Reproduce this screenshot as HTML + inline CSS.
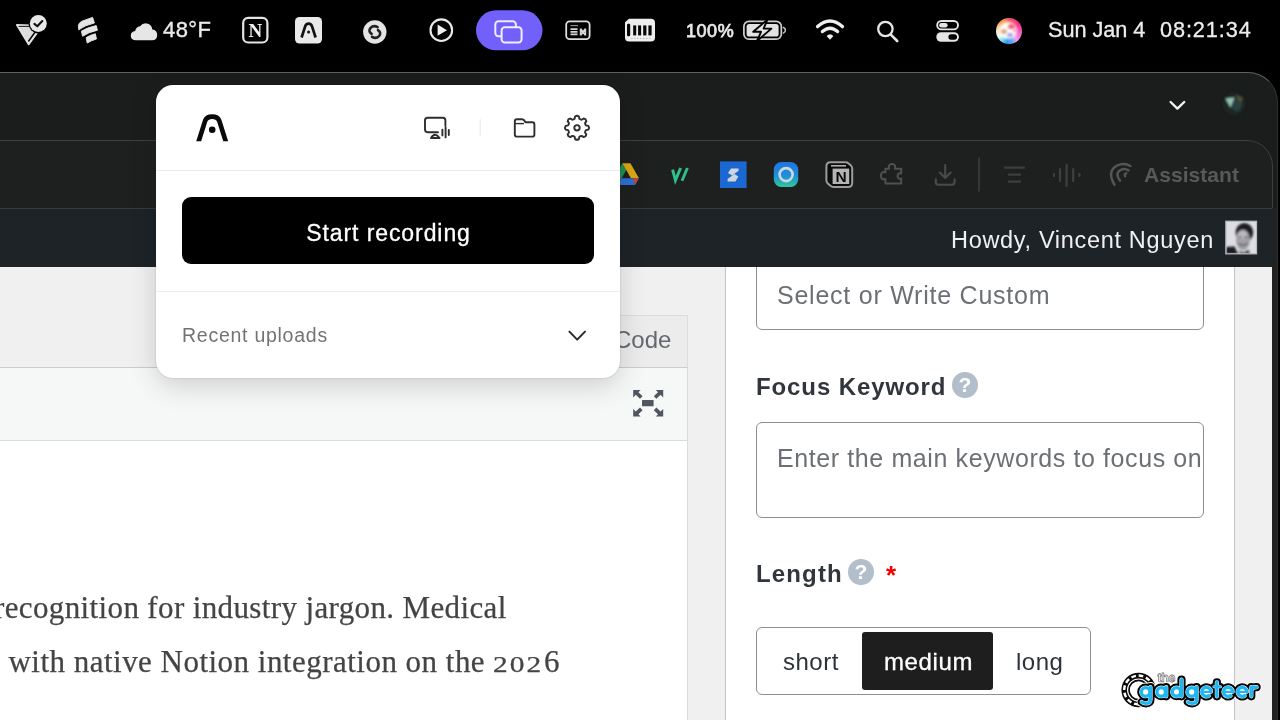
<!DOCTYPE html>
<html><head><meta charset="utf-8">
<style>
*{box-sizing:border-box;margin:0;padding:0}
html,body{width:1280px;height:720px;overflow:hidden;background:#000;font-family:"Liberation Sans",sans-serif;}
body{position:relative}
.a{position:absolute}
.a,.t,.ph,.lbl,.q{will-change:transform}
.t{position:absolute;white-space:nowrap}
/* browser window chrome */
#win{left:-40px;top:72px;width:1318px;height:700px;background:#1b1d1d;border:1px solid #5e6060;border-right-color:#2e3030;border-radius:0 30px 0 0}
#tool{left:-40px;top:140px;width:1313px;height:80px;border:1px solid #3d3f3f;border-radius:0 26px 0 0;background:#1e2020}
#wpbar{z-index:5;left:0;top:208px;width:1272px;height:59px;background:#1d2327;border-top:1px solid #383b3d}
#page{left:0;top:267px;width:1272px;height:453px;background:#f0f0f1}
#rstrip{left:1272px;top:208px;width:5px;height:512px;background:#202222}
#howdy{z-index:6;top:226.3px;left:951px;color:#f0f0f1;font-size:23.5px;letter-spacing:.68px;line-height:28px}
/* editor */
#codetab{left:600px;top:315px;width:88px;height:53px;background:#ececec;border:1px solid #dcdcde}
#edbar{left:0;top:367px;width:688px;height:74px;background:#f6f7f7;border:1px solid #dcdcde;border-top-color:#cbcccd;border-left:0}
#edbody{left:0;top:441px;width:688px;height:290px;background:#fff;border-right:1px solid #dcdcde}
.serif{font-family:"Liberation Serif",serif;color:#444;font-size:31px;line-height:36px;-webkit-text-stroke:.25px #444}
.os{display:inline-block;font-size:23.5px;letter-spacing:1.7px;width:50.6px;transform:scaleX(1.25);transform-origin:0 50%}
/* sidebar */
#side{left:725px;top:267px;width:510px;height:460px;background:#fff;border-left:1px solid #c3c4c7;border-right:1px solid #c3c4c7}
.inp{position:absolute;border:1.5px solid #8c8f94;border-radius:6px;background:#fff}
.ph{position:absolute;color:#6c7075;font-size:25px;letter-spacing:.76px;line-height:28px;white-space:nowrap}
.lbl{position:absolute;font-weight:bold;font-size:24px;color:#30363b;white-space:nowrap;line-height:28px}
.q{position:absolute;width:25.8px;height:25.8px;border-radius:50%;background:#b3becb;color:#fff;font-weight:bold;font-size:21px;text-align:center;line-height:26.6px}
/* popup */
#popup{z-index:10;left:156px;top:85px;width:464px;height:293px;background:#fff;border-radius:17px;box-shadow:0 8px 28px rgba(0,0,0,.16),0 0 2px rgba(0,0,0,.22)}
.sep{z-index:11;position:absolute;left:156px;width:464px;height:1px;background:#ebebeb}
#rec{z-index:11;left:182px;top:197px;width:412px;height:67px;background:#000;border-radius:9px;color:#fff;font-size:23px;letter-spacing:.92px;text-align:center;line-height:72.2px;padding-left:1px;-webkit-text-stroke:.3px #fff}
#recent{z-index:11;left:182px;top:321px;color:#737373;font-size:19.5px;letter-spacing:.74px;line-height:28px}
</style></head><body>
<!-- MENUBAR -->
<div id="menubar">
<svg class="a" style="left:0;top:0" width="1280" height="72" viewBox="0 0 1280 72">
<defs>
<radialGradient id="siri" cx="0.5" cy="0.5" r="0.5"><stop offset="0" stop-color="#fff"/><stop offset="0.55" stop-color="#ffd0dc"/><stop offset="1" stop-color="#ff5a7a"/></radialGradient>
<linearGradient id="siri2" x1="0" y1="0" x2="1" y2="1"><stop offset="0" stop-color="#ff9a3c"/><stop offset="0.45" stop-color="#ff4f8b"/><stop offset="0.75" stop-color="#b46bff"/><stop offset="1" stop-color="#2fb6ff"/></linearGradient>
</defs>
<!-- icon1: triangle + check circle -->
<path d="M16.8 24.9 L31 25.3 L36.8 33.2 L28.6 44.4 Z" fill="#dcdcdc" stroke="#e4e4e4" stroke-width="1.8" stroke-linejoin="round"/>
<path d="M18.6 26.4 L29.5 26.4" stroke="#222" stroke-width="1.1"/>
<path d="M28.7 41 L34.6 32.8" stroke="#0a0a0a" stroke-width="1.5" stroke-linecap="round"/>
<circle cx="38.3" cy="23.6" r="9.8" fill="#000"/>
<circle cx="38.3" cy="23.6" r="8.5" fill="#e8e8e8"/>
<path d="M34.4 23.9 L37.3 26.3 L42.3 21" fill="none" stroke="#111" stroke-width="2.1" stroke-linecap="round" stroke-linejoin="round"/>
<!-- icon2: stacked bands -->
<g fill="#e4e4e4" stroke="#e4e4e4" stroke-width="1" stroke-linejoin="round">
<path d="M78.4 25.4 Q79 22.6 82 21.2 L92.6 17.4 L94.4 23 Q85 25 78.8 29.8 Z"/>
<path d="M81.4 31.2 Q88 27.2 96.2 25.6 L97.4 30.2 Q89 32 82.6 36.2 Z"/>
<path d="M86.2 37.6 Q90.4 35 95.4 33.8 L96.4 39 Q91 40.6 87.2 43 Z"/>
</g>
<!-- cloud -->
<path d="M136 40.3 Q130.8 40.3 130.8 35.6 Q130.8 31.5 135.2 31 Q136 26.6 140 26.2 Q142.6 23 146.6 23.4 Q151.4 24 152.4 29.4 Q157.2 30 157.2 35 Q157.2 40.3 152 40.3 Z" fill="#e6e6e6"/>
<!-- notion -->
<rect x="243.2" y="17.9" width="24.2" height="24.6" rx="5" fill="none" stroke="#e4e4e4" stroke-width="2.2"/>
<text x="255.3" y="36.8" font-family="Liberation Serif" font-weight="bold" font-size="19" fill="#f0f0f0" text-anchor="middle">N</text>
<!-- A app -->
<rect x="295" y="17" width="27" height="26.5" rx="4.5" fill="#e9e9e9"/>
<path d="M301.6 37.5 L305 26.8 Q306 23.6 308.6 23.6 Q311.2 23.6 312.2 26.8 L315.6 37.5" fill="none" stroke="#111" stroke-width="2.7" stroke-linejoin="round"/>
<circle cx="308.6" cy="32" r="1.5" fill="#111"/>
<!-- shazam -->
<circle cx="374.8" cy="32" r="11.7" fill="#e4e4e4"/>
<path transform="translate(0,.5)" d="M377.6 26.6 Q373.6 24.2 370.6 27.4 Q367.8 30.6 371.6 33.4 M372 36.4 Q376 38.8 379 35.6 Q381.8 32.4 378 29.6" fill="none" stroke="#222" stroke-width="2.6" stroke-linecap="round"/>
<!-- play -->
<circle cx="441.3" cy="30.2" r="10.8" fill="none" stroke="#e9e9e9" stroke-width="2.1"/>
<path d="M437.6 24.6 L447 30.2 L437.6 35.8 Z" fill="#efefef"/>
<!-- purple pill -->
<rect x="476" y="10.3" width="66.5" height="40" rx="20" fill="#7160fa"/>
<rect x="495.3" y="21.2" width="20.6" height="15" rx="3.2" fill="none" stroke="#eeeaff" stroke-width="2"/>
<rect x="501.6" y="27.2" width="20" height="15.2" rx="3.2" fill="#7160fa" stroke="#f1eeff" stroke-width="2"/>
<!-- small window icon -->
<rect x="566.2" y="21.4" width="23.4" height="17.8" rx="3.4" fill="none" stroke="#dedede" stroke-width="1.8"/>
<path d="M570.5 25.6 H578" stroke="#8a8a8a" stroke-width="1.2"/>
<path d="M570.5 29.2 H577.5 M570.5 31.8 H577.5 M570.5 34.4 H577.5" stroke="#d6d6d6" stroke-width="1.7"/>
<path d="M580.6 28.6 V35.4 M585.4 28.6 V35.4 M580.6 28.8 L585.4 35.2 M585.4 28.8 L580.6 35.2" stroke="#d6d6d6" stroke-width="1.6"/>
<!-- memory -->
<path d="M629 18.7 H651 Q655 18.7 655 22.7 V37.6 Q655 41.6 651 41.6 H629 Q625 41.6 625 37.6 V22.2 Z" fill="#ededed"/>
<rect x="627" y="23.8" width="3.2" height="12.4" rx="1.2" fill="#050505"/>
<g fill="#050505"><rect x="633.2" y="25.4" width="3" height="10"/><rect x="638.1" y="25.4" width="3" height="10"/><rect x="643.2" y="25.4" width="3.2" height="10"/><rect x="648.4" y="25.4" width="3.2" height="10"/></g>
<path d="M631 38.4 H651" stroke="#b8b8b8" stroke-width="1" stroke-dasharray="1.6 1.4"/>
<!-- battery -->
<rect x="743.9" y="21.4" width="37.4" height="17.8" rx="5" fill="none" stroke="#cfcfcf" stroke-width="1.7"/>
<rect x="746.6" y="24" width="32" height="12.6" rx="2.6" fill="#e2e2e2"/>
<path d="M783.4 27.6 Q785.4 28.4 785.4 30.3 Q785.4 32.2 783.4 33" fill="none" stroke="#bdbdbd" stroke-width="1.6" stroke-linecap="round"/>
<path d="M767.4 19.6 L753.2 31.8 L761 31.8 L757 41 L771.4 28.6 L763.6 28.6 Z" fill="#e4e4e4" stroke="#000" stroke-width="1.9" stroke-linejoin="round"/>
<!-- wifi -->
<g fill="none" stroke="#efefef" stroke-linecap="round">
<path d="M817.6 26.6 Q830 15.4 842.4 26.6" stroke-width="3.4"/>
<path d="M822.4 31.6 Q830 24.8 837.6 31.6" stroke-width="3.3"/>
</g>
<path d="M826.6 36 Q830 32.6 833.4 36 L830 39.8 Z" fill="#efefef"/>
<!-- search -->
<circle cx="885.4" cy="29" r="7.2" fill="none" stroke="#e6e6e6" stroke-width="2.3"/>
<path d="M890.8 34.6 L897.2 41" stroke="#e6e6e6" stroke-width="2.6" stroke-linecap="round"/>
<!-- control center -->
<rect x="937.2" y="21" width="20.8" height="8.4" rx="4.2" fill="none" stroke="#e6e6e6" stroke-width="1.9"/>
<rect x="939.2" y="23" width="8.4" height="4.4" rx="2.2" fill="#e6e6e6"/>
<rect x="936.3" y="32.2" width="22.6" height="9.6" rx="4.8" fill="#e6e6e6"/>
<rect x="948.4" y="34.3" width="8.6" height="5.4" rx="2.7" fill="#000"/>
</svg>
<div class="a" style="left:996.4px;top:17.8px;width:25.8px;height:26.4px;border-radius:50%;overflow:hidden;background:conic-gradient(from 0deg,#f2556a 0deg,#fb2f86 55deg,#f55fc0 100deg,#ee9ff0 140deg,#5aa8f4 165deg,#2d9bf2 190deg,#6fd6ee 215deg,#eafaf4 240deg,#fbe7c4 270deg,#f6a54c 310deg,#f39a48 335deg,#f2556a 360deg)">
<div class="a" style="left:3.4px;top:4.2px;width:17.8px;height:17.4px;border-radius:50%;background:#fff;filter:blur(1.6px);opacity:.96"></div>
<div class="a" style="left:11.6px;top:6.4px;width:7px;height:5px;border-radius:50%;background:#ea5060;filter:blur(1.2px);opacity:.85"></div>
<div class="a" style="left:5.4px;top:10.6px;width:6.4px;height:5px;border-radius:50%;background:#e0956a;filter:blur(1.2px);opacity:.8"></div>
<div class="a" style="left:11.4px;top:15px;width:6px;height:4.4px;border-radius:50%;background:#8f8fe0;filter:blur(1.2px);opacity:.8"></div>
<div class="a" style="left:17px;top:11.4px;width:3.4px;height:3px;border-radius:50%;background:#f06aa0;filter:blur(1px);opacity:.7"></div>
</div>
<div class="t" style="left:162.5px;top:16.5px;font-size:22px;line-height:26px;color:#ececec;letter-spacing:.4px;-webkit-text-stroke:.35px #ececec">48°F</div>
<div class="t" style="left:686px;top:20.6px;font-size:18px;line-height:20px;color:#e8e8e8;letter-spacing:.55px;-webkit-text-stroke:.75px #e8e8e8">100%</div>
<div class="t" style="left:1048px;top:17px;font-size:21.7px;line-height:26px;color:#ededed;letter-spacing:-.05px;-webkit-text-stroke:.3px #ededed">Sun Jan 4</div>
<div class="t" style="left:1159.5px;top:17px;font-size:21.7px;line-height:26px;color:#ededed;letter-spacing:.9px;-webkit-text-stroke:.3px #ededed">08:21:34</div>
</div>
<!-- WINDOW -->
<div id="win" class="a"></div>
<div id="tool" class="a"></div>
<div id="wpbar" class="a"></div>
<div id="rstrip" class="a"></div>
<!-- TABSTRIP + TOOLBAR ICONS -->
<svg class="a" style="left:600px;top:72px" width="680" height="140" viewBox="600 72 680 140">
<defs>
<linearGradient id="bt" x1="0" y1="0" x2="0" y2="1"><stop offset="0" stop-color="#1f74e2"/><stop offset="0.55" stop-color="#1f8fd8"/><stop offset="1" stop-color="#30c79c"/></linearGradient>
<radialGradient id="pf" cx="0.4" cy="0.45" r="0.6"><stop offset="0" stop-color="#5f8f86"/><stop offset="0.5" stop-color="#2d3a36"/><stop offset="1" stop-color="#1a1d1c"/></radialGradient>
<filter id="b1"><feGaussianBlur stdDeviation="1.1"/></filter>
</defs>
<!-- tabstrip chevron -->
<path d="M1170.6 102 L1177.4 108.6 L1184.2 102" fill="none" stroke="#f1f1f1" stroke-width="2.4" stroke-linecap="round" stroke-linejoin="round"/>
<!-- profile avatar -->
<g filter="url(#b1)">
<circle cx="1234.2" cy="103.8" r="11.4" fill="#1f2523"/>
<path d="M1225.4 98.5 L1234.6 97.6 L1230.6 107.4 Z" fill="#8fc2b4"/>
<path d="M1235 94.5 L1243 98 L1240.5 104 Z" fill="#4f5230"/>
<path d="M1235 98 L1243 104 L1238 112 L1231.6 108.6 Z" fill="#2b403f"/>
</g>
<!-- google drive -->
<path d="M622.4 163.2 L613.6 178.4 L617.6 185 L626.6 169.6 Z" fill="#1c9150"/>
<path d="M622.4 163.2 L630.4 163.2 L638.8 178 L630.8 178 Z" fill="#dba715"/>
<path d="M617.6 185 L621.4 178.2 L638.8 178.2 L635 185 Z" fill="#2f6fd6"/>
<path d="M632.6 178.2 L638.8 178.2 L635.4 184.6 Z" fill="#c5432f"/>
<!-- v// -->
<g stroke="#2fc08b" stroke-width="2.9" fill="none">
<path d="M672.6 169.6 L675.4 180.4 L680.6 168"/>
<path d="M687.4 168 L682 180.8"/>
</g>
<!-- blue S -->
<rect x="720" y="161.4" width="26.6" height="26.6" fill="#1c68d2"/>
<path d="M738.6 168.4 L731 168.4 L728 173 L732 175.6 L738.6 170.8 Z M727.6 181.4 L735.4 181.4 L738.4 176.6 L734.4 174 L727.6 179 Z" fill="#cfd5df"/>
<!-- blue/teal circle app -->
<rect x="773.8" y="162" width="24.4" height="25" rx="7.5" fill="url(#bt)"/>
<circle cx="786.1" cy="174.6" r="6.5" fill="none" stroke="#c9d9de" stroke-width="2.6"/>
<!-- notion outline -->
<path d="M826.4 166.4 Q826.4 162.2 830.6 162.2 L845.4 162.2 Q847.2 162.2 848.6 163.4 L851 165.6 Q852.2 166.8 852.2 168.6 L852.2 182.8 Q852.2 187 848 187 L833.6 187 Q831.8 187 830.4 185.8 L827.6 183.2 Q826.4 182 826.4 180.2 Z" fill="#0c0c0c" stroke="#9c9c9c" stroke-width="2" stroke-linejoin="round"/>
<path d="M831 165.8 H846" stroke="#b0b0b0" stroke-width="1.6"/>
<rect x="832.6" y="168.6" width="16.6" height="15.4" fill="#b4b4b4"/>
<text x="841" y="182.4" font-family="Liberation Sans" font-weight="bold" font-size="15.5" fill="#0a0a0a" text-anchor="middle">N</text>
<!-- puzzle -->
<path d="M885.4 168.8 H889.2 Q887.8 164 892 164 Q896.2 164 894.8 168.8 H901.2 V173.6 Q897.6 172.6 897.6 176 Q897.6 179.4 901.2 178.4 V183.6 H885.4 V179 Q881 180.4 881 175.6 Q881 171 885.4 172.4 Z" fill="none" stroke="#4f5151" stroke-width="2" stroke-linejoin="round"/>
<!-- download -->
<g fill="none" stroke="#494b4b" stroke-width="2.1" stroke-linecap="round" stroke-linejoin="round">
<path d="M945.2 165 V177.6 M939.8 172.6 L945.2 178 L950.6 172.6"/>
<path d="M935.8 179.4 V182 Q935.8 184.8 938.6 184.8 H951.8 Q954.6 184.8 954.6 182 V179.4"/>
</g>
<rect x="978" y="157.6" width="2" height="34" fill="#353737"/>
<!-- lines -->
<g stroke="#3c3e3e" stroke-width="2.3">
<path d="M1004.2 167.6 H1024.8 M1008 174.6 H1021 M1008 181.6 H1021"/>
</g>
<!-- waveform -->
<g stroke="#3e4040" stroke-width="2.2" stroke-linecap="round">
<path d="M1054 174 V176 M1060 169 V181 M1066.6 164.6 V186 M1073.2 169 V181 M1079.4 174 V176"/>
</g>
<!-- arcs -->
<g fill="none" stroke="#545656" stroke-width="2.5" stroke-linecap="round">
<path d="M1114.4 184.6 Q1106.6 171 1117 165.6 Q1123.6 162.2 1130.4 166"/>
<path d="M1120 180.6 Q1114.6 173.4 1120.6 170 Q1124.6 168 1128.4 170.4"/>
<path d="M1125.2 176.2 Q1123.8 174.2 1126.2 173.4"/>
</g>
</svg>
<div class="t" style="left:1144px;top:162.3px;font-size:21px;line-height:26px;font-weight:bold;color:#585a5a;letter-spacing:.05px">Assistant</div>
<div id="howdy" class="t">Howdy, Vincent Nguyen</div>
<div id="page" class="a"></div>
<!-- EDITOR -->
<div id="codetab" class="a"></div>
<div class="t" style="left:614px;top:326px;font-size:24px;line-height:28px;color:#646970">Code</div>
<div id="edbar" class="a"></div>
<div id="edbody" class="a"></div>
<div class="t serif" style="left:-6.5px;top:590.2px;letter-spacing:.37px">recognition for industry jargon. Medical</div>
<div class="t serif" style="left:-8px;top:644.4px;letter-spacing:.48px">, with native Notion integration on the <span class="os">202</span>6</div>
<!-- SIDEBAR -->
<div id="side" class="a"></div>
<div class="inp" style="left:756px;top:250px;width:448px;height:80px"></div>
<div class="ph" style="left:777.4px;top:281px">Select or Write Custom</div>
<div class="lbl" style="left:756px;top:372.5px;letter-spacing:.9px">Focus Keyword</div>
<div class="q" style="left:952px;top:372.2px">?</div>
<div class="inp" style="left:756px;top:422px;width:448px;height:96px"></div>
<div class="ph" style="left:777.4px;top:443.6px;width:425px;overflow:hidden;letter-spacing:.6px">Enter the main keywords to focus on</div>
<div class="lbl" style="left:756px;top:560px;letter-spacing:1.15px">Length</div>
<div class="q" style="left:848.2px;top:559.2px">?</div>
<div class="t" style="left:886.4px;top:561.4px;color:#f40000;font-size:26px;font-weight:bold;line-height:28px">*</div>
<div class="inp" style="left:756px;top:627px;width:335px;height:68px"></div>
<div class="a" style="left:862px;top:632px;width:131px;height:58px;background:#1e1e1e;border-radius:3px"></div>
<div class="t" style="left:783px;top:648px;font-size:24px;line-height:28px;color:#2c3338;letter-spacing:.5px">short</div>
<div class="t" style="left:884px;top:648px;font-size:24px;line-height:28px;color:#fff;letter-spacing:.62px;-webkit-text-stroke:.3px #fff">medium</div>
<div class="t" style="left:1016px;top:648px;font-size:24px;line-height:28px;color:#2c3338;letter-spacing:.5px">long</div>
<!-- WP AVATAR -->
<svg class="a" style="left:1222px;top:217px;z-index:7" width="40" height="42" viewBox="1222 217 40 42">
<defs><filter id="b2"><feGaussianBlur stdDeviation="1"/></filter><clipPath id="avc"><rect x="1226.5" y="222" width="29.4" height="31.2"/></clipPath></defs>
<rect x="1225.9" y="221.3" width="30.6" height="32.5" fill="#dddde4" stroke="#b9bdc1" stroke-width="1.3"/>
<g clip-path="url(#avc)" filter="url(#b2)">
<ellipse cx="1244.4" cy="232.6" rx="8.8" ry="9.6" fill="#1e1e22"/>
<ellipse cx="1243" cy="240" rx="7" ry="10.4" fill="#a0a0a6"/>
<ellipse cx="1242.4" cy="235" rx="4.8" ry="4" fill="#b8b8be"/>
<path d="M1226 247 L1234.6 246.4 L1238 254 L1226 254 Z" fill="#1c1c20"/>
<path d="M1238 250.6 L1241 254 L1250 254 L1248.6 249.6 L1244 252.4 Z" fill="#4a4a50"/>
<path d="M1238.6 243.6 Q1243 247 1247.6 243.2" stroke="#5a5a60" stroke-width="1.4" fill="none"/><path d="M1238.8 237.4 H1241.6 M1244.6 237.2 H1247.4" stroke="#4a4a50" stroke-width="1.3" fill="none"/>
</g>
</svg>
<!-- FULLSCREEN ICON -->
<svg class="a" style="left:630px;top:386px" width="36" height="34" viewBox="630 386 36 34">
<g fill="#50565d">
<rect x="642" y="399.9" width="11.6" height="6.4" rx=".6"/>
<path d="M633.2 390 L640.6 390 L638.4 392.2 L642.6 396.2 L640 398.8 L635.8 394.8 L633.2 397.4 Z"/>
<path d="M663.2 390 L663.2 397.4 L660.6 394.8 L656.4 398.8 L653.8 396.2 L658 392.2 L655.8 390 Z"/>
<path d="M633.2 416.4 L633.2 409 L635.8 411.6 L640 407.6 L642.6 410.2 L638.4 414.2 L640.6 416.4 Z"/>
<path d="M663.2 416.4 L655.8 416.4 L658 414.2 L653.8 410.2 L656.4 407.6 L660.6 411.6 L663.2 409 Z"/>
</g>
</svg>
<!-- WATERMARK -->
<svg class="a" style="left:1115px;top:665px;z-index:4" width="150" height="50" viewBox="1115 665 150 50">
<circle cx="1138.6" cy="690" r="14.4" fill="none" stroke="#0a0a0a" stroke-width="5.6"/>
<circle cx="1138.6" cy="690" r="14.4" fill="none" stroke="#fff" stroke-width="2.5" stroke-dasharray="4.6 2.9"/>
<circle cx="1138.6" cy="690" r="9.6" fill="#fff" stroke="#0a0a0a" stroke-width="1.7"/>
<text x="1157.6" y="682" font-family="Liberation Sans" font-weight="bold" font-size="12.5" fill="#fff" stroke="#808080" stroke-width=".8" letter-spacing="-.4">the</text>
<g fill="none" stroke-linecap="round" stroke-linejoin="round">
<path d="M1141.30 691.9 a4.3 4.3 0 1 0 8.60 0 a4.3 4.3 0 1 0 -8.60 0 M1150.5 687.2 V699.2 Q1150.5 703.4 1146 703.4 Q1143.4 703.4 1141.8 702 M1156.90 691.9 a4.3 4.3 0 1 0 8.60 0 a4.3 4.3 0 1 0 -8.60 0 M1166.2 687.2 V696.3 M1172.20 691.9 a4.3 4.3 0 1 0 8.60 0 a4.3 4.3 0 1 0 -8.60 0 M1181.5 679.6 V696.3 M1187.40 691.9 a4.3 4.3 0 1 0 8.60 0 a4.3 4.3 0 1 0 -8.60 0 M1196.6 687.2 V699.2 Q1196.6 703.4 1192.1 703.4 Q1189.5 703.4 1187.9 702 M1210.95 691.60 A4.55 4.55 0 1 0 1208.81 695.76 M1232.65 691.60 A4.55 4.55 0 1 0 1230.51 695.76 M1246.85 691.60 A4.55 4.55 0 1 0 1244.71 695.76 M1216.9 682.3 V696.3 M1251.3 687.2 V696.3 M1251.3 690.8 Q1251.8 687 1256.6 687.2" stroke="#fff" stroke-width="10.2"/><path d="M1201.85 691.80 H1210.95 M1223.55 691.80 H1232.65 M1237.75 691.80 H1246.85 M1214 686.7 H1220.4" stroke="#fff" stroke-width="9.2"/>
<path d="M1141.30 691.9 a4.3 4.3 0 1 0 8.60 0 a4.3 4.3 0 1 0 -8.60 0 M1150.5 687.2 V699.2 Q1150.5 703.4 1146 703.4 Q1143.4 703.4 1141.8 702 M1156.90 691.9 a4.3 4.3 0 1 0 8.60 0 a4.3 4.3 0 1 0 -8.60 0 M1166.2 687.2 V696.3 M1172.20 691.9 a4.3 4.3 0 1 0 8.60 0 a4.3 4.3 0 1 0 -8.60 0 M1181.5 679.6 V696.3 M1187.40 691.9 a4.3 4.3 0 1 0 8.60 0 a4.3 4.3 0 1 0 -8.60 0 M1196.6 687.2 V699.2 Q1196.6 703.4 1192.1 703.4 Q1189.5 703.4 1187.9 702 M1210.95 691.60 A4.55 4.55 0 1 0 1208.81 695.76 M1232.65 691.60 A4.55 4.55 0 1 0 1230.51 695.76 M1246.85 691.60 A4.55 4.55 0 1 0 1244.71 695.76 M1216.9 682.3 V696.3 M1251.3 687.2 V696.3 M1251.3 690.8 Q1251.8 687 1256.6 687.2" stroke="#060606" stroke-width="8.2"/><path d="M1201.85 691.80 H1210.95 M1223.55 691.80 H1232.65 M1237.75 691.80 H1246.85 M1214 686.7 H1220.4" stroke="#060606" stroke-width="7.2"/>
<circle cx="1145.6" cy="691.9" r="4.3" fill="#fff"/><circle cx="1161.2" cy="691.9" r="4.3" fill="#fff"/><circle cx="1176.5" cy="691.9" r="4.3" fill="#fff"/><circle cx="1191.7" cy="691.9" r="4.3" fill="#fff"/><circle cx="1206.4" cy="691.9" r="4.3" fill="#fff"/><circle cx="1228.1" cy="691.9" r="4.3" fill="#fff"/><circle cx="1242.3" cy="691.9" r="4.3" fill="#fff"/>
<path d="M1141.30 691.9 a4.3 4.3 0 1 0 8.60 0 a4.3 4.3 0 1 0 -8.60 0 M1150.5 687.2 V699.2 Q1150.5 703.4 1146 703.4 Q1143.4 703.4 1141.8 702 M1156.90 691.9 a4.3 4.3 0 1 0 8.60 0 a4.3 4.3 0 1 0 -8.60 0 M1166.2 687.2 V696.3 M1172.20 691.9 a4.3 4.3 0 1 0 8.60 0 a4.3 4.3 0 1 0 -8.60 0 M1181.5 679.6 V696.3 M1187.40 691.9 a4.3 4.3 0 1 0 8.60 0 a4.3 4.3 0 1 0 -8.60 0 M1196.6 687.2 V699.2 Q1196.6 703.4 1192.1 703.4 Q1189.5 703.4 1187.9 702 M1210.95 691.60 A4.55 4.55 0 1 0 1208.81 695.76 M1232.65 691.60 A4.55 4.55 0 1 0 1230.51 695.76 M1246.85 691.60 A4.55 4.55 0 1 0 1244.71 695.76 M1216.9 682.3 V696.3 M1251.3 687.2 V696.3 M1251.3 690.8 Q1251.8 687 1256.6 687.2" stroke="#fff" stroke-width="4.2"/><path d="M1201.85 691.80 H1210.95 M1223.55 691.80 H1232.65 M1237.75 691.80 H1246.85 M1214 686.7 H1220.4" stroke="#fff" stroke-width="3"/>
<path d="M1141.30 691.9 a4.3 4.3 0 1 0 8.60 0 a4.3 4.3 0 1 0 -8.60 0 M1150.5 687.2 V699.2 Q1150.5 703.4 1146 703.4 Q1143.4 703.4 1141.8 702 M1156.90 691.9 a4.3 4.3 0 1 0 8.60 0 a4.3 4.3 0 1 0 -8.60 0 M1166.2 687.2 V696.3 M1172.20 691.9 a4.3 4.3 0 1 0 8.60 0 a4.3 4.3 0 1 0 -8.60 0 M1181.5 679.6 V696.3 M1187.40 691.9 a4.3 4.3 0 1 0 8.60 0 a4.3 4.3 0 1 0 -8.60 0 M1196.6 687.2 V699.2 Q1196.6 703.4 1192.1 703.4 Q1189.5 703.4 1187.9 702 M1210.95 691.60 A4.55 4.55 0 1 0 1208.81 695.76 M1232.65 691.60 A4.55 4.55 0 1 0 1230.51 695.76 M1246.85 691.60 A4.55 4.55 0 1 0 1244.71 695.76 M1216.9 682.3 V696.3 M1251.3 687.2 V696.3 M1251.3 690.8 Q1251.8 687 1256.6 687.2" stroke="#1fb6f2" stroke-width="3.4"/><path d="M1201.85 691.80 H1210.95 M1223.55 691.80 H1232.65 M1237.75 691.80 H1246.85 M1214 686.7 H1220.4" stroke="#1fb6f2" stroke-width="2.3"/>
</g>
</svg>
<!-- POPUP -->
<div id="popup" class="a"></div>
<svg class="a" style="left:156px;top:85px;z-index:12" width="464" height="293" viewBox="156 85 464 293">
<!-- logo -->
<clipPath id="lgc"><rect x="190" y="110" width="45" height="31.3"/></clipPath><path clip-path="url(#lgc)" d="M198 143.4 L205.2 120.6 Q206.8 116.6 212.2 116.6 Q217.6 116.6 219.2 120.6 L226.4 143.4" fill="none" stroke="#0a0a0a" stroke-width="4.7" stroke-linejoin="round"/>
<circle cx="212.2" cy="129.7" r="3.3" fill="#0a0a0a"/>
<!-- screen+audio -->
<g fill="none" stroke="#2e2e2e" stroke-width="1.9" stroke-linecap="round" stroke-linejoin="round">
<path d="M438 132.2 H427.6 Q425 132.2 425 129.6 V120.4 Q425 117.8 427.6 117.8 H442.8 Q445.4 117.8 445.4 120.4 V126"/>
<path d="M431 138 Q435 131.6 439.6 138 Z"/>
<path d="M442.4 129.6 V135.4 M445.6 127.4 V137.4 M448.8 130 V135"/>
</g>
<rect x="479.6" y="119" width="1.2" height="17.6" fill="#ececec"/>
<!-- folder -->
<path d="M514.8 121.4 Q514.8 119.2 517 119.2 H522 Q523.4 119.2 524.2 120.4 L525.4 122.2 H532.2 Q534.4 122.2 534.4 124.4 V134.4 Q534.4 136.6 532.2 136.6 H517 Q514.8 136.6 514.8 134.4 Z" fill="none" stroke="#2e2e2e" stroke-width="1.9" stroke-linejoin="round"/>
<path d="M515 123.6 H524" stroke="#2e2e2e" stroke-width="1.4"/>
<!-- gear -->
<g fill="none" stroke="#2e2e2e" stroke-width="1.9" stroke-linejoin="round">
<path d="M575.11 116.46 Q577.00 115.10 578.89 116.46 L579.38 118.81 Q580.37 119.67 581.67 119.76 L583.69 118.44 Q585.98 118.82 586.36 121.11 L585.04 123.13 Q585.13 124.43 585.99 125.42 L588.34 125.91 Q589.70 127.80 588.34 129.69 L585.99 130.18 Q585.13 131.17 585.04 132.47 L586.36 134.49 Q585.98 136.78 583.69 137.16 L581.67 135.84 Q580.37 135.93 579.38 136.79 L578.89 139.14 Q577.00 140.50 575.11 139.14 L574.62 136.79 Q573.63 135.93 572.33 135.84 L570.31 137.16 Q568.02 136.78 567.64 134.49 L568.96 132.47 Q568.87 131.17 568.01 130.18 L565.66 129.69 Q564.30 127.80 565.66 125.91 L568.01 125.42 Q568.87 124.43 568.96 123.13 L567.64 121.11 Q568.02 118.82 570.31 118.44 L572.33 119.76 Q573.63 119.67 574.62 118.81 L575.11 116.46 Z"/>
<circle cx="577" cy="127.8" r="2.7"/>
</g>
<!-- chevron -->
<path d="M569.4 331.6 L577.2 339.6 L585 331.6" fill="none" stroke="#2a2a2a" stroke-width="2" stroke-linecap="round" stroke-linejoin="round"/>
</svg>
<div class="sep" style="top:170px"></div>
<div id="rec" class="a">Start recording</div>
<div class="sep" style="top:291px"></div>
<div id="recent" class="t">Recent uploads</div>
</body></html>
